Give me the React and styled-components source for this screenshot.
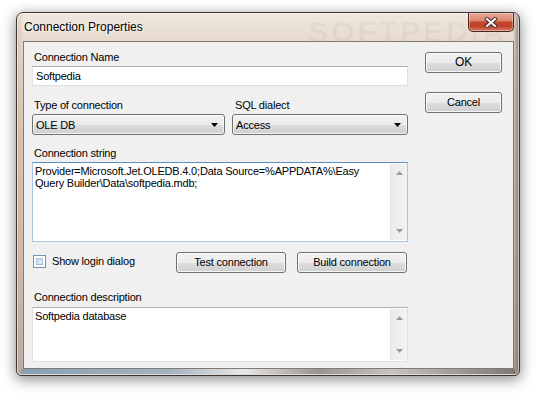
import React from "react";
import styled, { createGlobalStyle } from "styled-components";

const Global = createGlobalStyle`
  html, body { margin: 0; padding: 0; background: #ffffff; }
  body { font-family: "Liberation Sans", Arial, sans-serif; }
`;

const Page = styled.div`
  padding: 12px 0 0 16px;
  width: 540px;
  height: 396px;
  box-sizing: border-box;
`;

const Frame = styled.div`
  position: relative;
  width: 504px;
  height: 364px;
  box-sizing: border-box;
  border: 1px solid #3a3836;
  border-radius: 7px 7px 5px 5px;
  padding: 0 5px 6px 6px;
  display: flex;
  flex-direction: column;
  background:
    linear-gradient(90deg, rgba(205, 150, 115, 0.35) 0px, rgba(205, 150, 115, 0) 6px,
      rgba(0, 0, 0, 0) 496px, rgba(80, 70, 62, 0.6) 502px),
    linear-gradient(180deg, #efe7de 0px, #e6dacd 28px, #d9c8b8 120px, #cdbcae 260px, #b8aea6 364px);
  box-shadow: 0 3px 14px rgba(0, 0, 0, 0.5), inset 0 0 0 1px rgba(255, 255, 255, 0.55);
  overflow: hidden;
`;

const BottomGlow = styled.div`
  position: absolute;
  left: 4px;
  right: 4px;
  bottom: 1px;
  height: 5px;
  background: linear-gradient(90deg, #7d9cb5 0%, #9db4c6 30%, #f4f6f7 45%, #8f8f8f 60%, #c8c8c8 75%, #6f6a66 100%);
  opacity: 0.8;
  pointer-events: none;
`;

const TitleBar = styled.div`
  height: 28px;
  display: flex;
  justify-content: space-between;
  align-items: flex-start;
  position: relative;
`;

const Title = styled.div`
  padding: 7px 0 0 1px;
  font-size: 12px;
  line-height: 15px;
  color: #000;
  text-shadow: 0 0 6px rgba(255, 255, 255, 0.95), 0 0 3px rgba(255, 255, 255, 0.9);
`;

const TitleWatermark = styled.div`
  position: absolute;
  left: 285px;
  top: 2px;
  font-size: 30px;
  font-weight: bold;
  letter-spacing: 3px;
  color: rgba(120, 100, 85, 0.06);
  pointer-events: none;
`;

const CloseButton = styled.div`
  width: 46px;
  height: 19px;
  box-sizing: border-box;
  border: 1px solid #4a2520;
  border-top: none;
  border-radius: 0 0 5px 5px;
  background: linear-gradient(180deg, #e9a896 0%, #dc8670 42%, #c5472f 50%, #be3f29 72%, #d77c63 100%);
  box-shadow: inset 0 0 0 1px rgba(255, 255, 255, 0.35);
  display: flex;
  align-items: center;
  justify-content: center;
`;

const Client = styled.div`
  position: relative;
  flex: 1;
  border: 1px solid #7f7a76;
  background: #f0f0f0;
  display: flex;
  padding: 8px 11px 5px 8px;
  font-size: 11px;
  letter-spacing: -0.2px;
  color: #000;
`;

const FormColumn = styled.div`
  width: 376px;
  display: flex;
  flex-direction: column;
`;

const ButtonColumn = styled.div`
  margin-left: 17px;
  padding-top: 2px;
  display: flex;
  flex-direction: column;
  gap: 19px;
`;

const Label = styled.div`
  height: 14px;
  line-height: 14px;
  padding-left: ${(p) => p.$indent ?? 2}px;
  margin-top: ${(p) => p.$mt ?? 0}px;
  margin-bottom: ${(p) => p.$mb ?? 2}px;
  white-space: nowrap;
`;

const Input = styled.div`
  height: 20px;
  box-sizing: border-box;
  border: 1px solid #dbdfe6;
  border-top-color: #abadb3;
  border-left-color: #e2e3ea;
  background: #fff;
  padding-left: 3px;
  line-height: 18px;
`;

const Row = styled.div`
  display: flex;
  gap: 7px;
  margin-top: 12px;
`;

const Field = styled.div`
  width: ${(p) => p.$w}px;
  display: flex;
  flex-direction: column;
`;

const Select = styled.div`
  height: 21px;
  box-sizing: border-box;
  border: 1px solid #707070;
  border-radius: 3px;
  background: linear-gradient(180deg, #f2f2f2 0%, #ebebeb 50%, #dddddd 51%, #cfcfcf 100%);
  box-shadow: inset 0 0 0 1px rgba(255, 255, 255, 0.75);
  display: flex;
  align-items: center;
  justify-content: space-between;
  padding: 0 6px 0 3px;
`;

const TextArea = styled.div`
  height: ${(p) => p.$h}px;
  box-sizing: border-box;
  border: 1px solid ${(p) => (p.$focus ? "#a7c6e8" : "#dbdfe6")};
  border-top-color: ${(p) => (p.$focus ? "#5d8fc2" : "#abadb3")};
  background: #fff;
  display: flex;
`;

const TextContent = styled.div`
  flex: 1;
  padding: 2px 0 0 2px;
  line-height: 12px;
  white-space: nowrap;
`;

const ScrollTrack = styled.div`
  width: 17px;
  margin: 1px 0 1px 0;
  border-left: 1px solid #e3e3e3;
  background: linear-gradient(90deg, #ebebeb 0%, #f3f3f3 100%);
  display: flex;
  flex-direction: column;
  justify-content: space-between;
  align-items: center;
  padding: 7px 0 7px 0;
  box-sizing: border-box;
`;

const ActionRow = styled.div`
  height: 21px;
  margin-top: 10px;
  display: flex;
  align-items: center;
  justify-content: space-between;
`;

const CheckLabel = styled.div`
  display: flex;
  align-items: center;
  gap: 6px;
  padding-left: 1px;
  padding-bottom: 3px;
`;

const CheckBox = styled.div`
  width: 13px;
  height: 13px;
  box-sizing: border-box;
  border: 1px solid #7592b8;
  background: #fff;
  padding: 2px;
`;

const CheckInner = styled.div`
  width: 100%;
  height: 100%;
  box-sizing: border-box;
  border: 1px solid #a9c0dc;
  background: linear-gradient(135deg, #c5d8ef 0%, #e8f0fa 100%);
`;

const ButtonGroup = styled.div`
  display: flex;
  gap: 11px;
  margin-right: 1px;
`;

const Button = styled.div`
  width: ${(p) => p.$w}px;
  height: 21px;
  box-sizing: border-box;
  border: 1px solid #707070;
  border-radius: 3px;
  background: linear-gradient(180deg, #f2f2f2 0%, #ebebeb 50%, #dddddd 51%, #cfcfcf 100%);
  box-shadow: inset 0 0 0 1px rgba(255, 255, 255, 0.8);
  display: flex;
  align-items: center;
  justify-content: center;
  font-size: ${(p) => p.$fs ?? 11}px;
  line-height: 19px;
`;

const CloseGlyph = () => (
  <svg width="14" height="11" viewBox="0 0 14 11">
    <path d="M3 2 L11 9 M11 2 L3 9" stroke="#3a2420" strokeWidth="4" strokeLinecap="square" />
    <path d="M3 2 L11 9 M11 2 L3 9" stroke="#ffffff" strokeWidth="2.2" strokeLinecap="square" />
  </svg>
);

const DropArrow = () => (
  <svg width="7" height="4" viewBox="0 0 7 4">
    <path d="M0 0 H7 L3.5 4 Z" fill="#000" />
  </svg>
);

const ScrollArrow = ({ up }) => (
  <svg width="7" height="4" viewBox="0 0 7 4">
    <path d={up ? "M0 4 H7 L3.5 0 Z" : "M0 0 H7 L3.5 4 Z"} fill="#9a9a9a" />
  </svg>
);

const Scroll = () => (
  <ScrollTrack>
    <ScrollArrow up />
    <ScrollArrow />
  </ScrollTrack>
);

export default function App() {
  return (
    <>
      <Global />
      <Page>
        <Frame>
          <TitleBar>
            <TitleWatermark>SOFTPEDIA</TitleWatermark>
            <Title>Connection Properties</Title>
            <CloseButton>
              <CloseGlyph />
            </CloseButton>
          </TitleBar>
          <Client>
            <FormColumn>
              <Label>Connection Name</Label>
              <Input>Softpedia</Input>
              <Row>
                <Field $w={193}>
                  <Label>Type of connection</Label>
                  <Select>
                    <span>OLE DB</span>
                    <DropArrow />
                  </Select>
                </Field>
                <Field $w={176}>
                  <Label $indent={3}>SQL dialect</Label>
                  <Select>
                    <span>Access</span>
                    <DropArrow />
                  </Select>
                </Field>
              </Row>
              <Label $mt={11}>Connection string</Label>
              <TextArea $h={80} $focus>
                <TextContent>
                  Provider=Microsoft.Jet.OLEDB.4.0;Data Source=%APPDATA%\Easy
                  <br />
                  Query Builder\Data\softpedia.mdb;
                </TextContent>
                <Scroll />
              </TextArea>
              <ActionRow>
                <CheckLabel>
                  <CheckBox>
                    <CheckInner />
                  </CheckBox>
                  <span>Show login dialog</span>
                </CheckLabel>
                <ButtonGroup>
                  <Button $w={110}>Test connection</Button>
                  <Button $w={110}>Build connection</Button>
                </ButtonGroup>
              </ActionRow>
              <Label $mt={17} $mb={3}>Connection description</Label>
              <TextArea $h={55}>
                <TextContent>Softpedia database</TextContent>
                <Scroll />
              </TextArea>
            </FormColumn>
            <ButtonColumn>
              <Button $w={77} $fs={12}>OK</Button>
              <Button $w={77}>Cancel</Button>
            </ButtonColumn>
          </Client>
          <BottomGlow />
        </Frame>
      </Page>
    </>
  );
}
